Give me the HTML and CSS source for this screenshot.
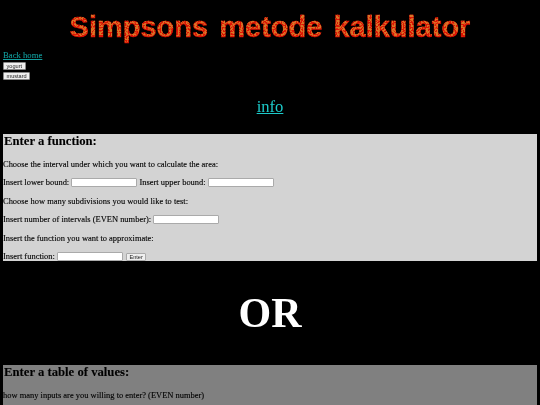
FILE: index.html
```html
<!DOCTYPE html>
<html lang="no">
<head>
<meta charset="utf-8">
<title>Simpsons metode kalkulator</title>
<link rel="stylesheet" href="styles.css">
</head>
<body>
<svg class="defs" width="0" height="0" aria-hidden="true">
  <filter id="fire" x="-5%" y="-20%" width="110%" height="140%" color-interpolation-filters="sRGB">
    <feOffset in="SourceAlpha" dy="-1" result="up"/>
    <feComposite in="up" in2="SourceAlpha" operator="in" result="inner"/>
    <feTurbulence type="fractalNoise" baseFrequency="0.6" numOctaves="2" seed="11" result="noise"/>
    <feColorMatrix in="noise" type="matrix" values="0 0 0 0 0.85  0 0 0 0 0.46  0 0 0 0 0.15  9 0 0 0 -3.8" result="spark"/>
    <feComposite in="spark" in2="inner" operator="in" result="sparkIn"/>
    <feGaussianBlur in="sparkIn" stdDeviation="0.3" result="sparkSoft"/>
    <feMerge>
      <feMergeNode in="SourceGraphic"/>
      <feMergeNode in="sparkSoft"/>
    </feMerge>
  </filter>
</svg>
<div class="page">
<header class="banner"><h1 class="fire">Simpsons metode kalkulator</h1></header>
<a class="home" href="#">Back home</a>
<div class="themes">
  <button class="small" type="button">yogurt</button>
  <button class="small" type="button">mustard</button>
</div>
<div class="info"><a href="#">info</a></div>
<section class="panel light">
  <h2>Enter a function:</h2>
  <p>Choose the interval under which you want to calculate the area:</p>
  <p>Insert lower bound: <input type="text"> Insert upper bound: <input type="text"></p>
  <p>Choose how many subdivisions you would like to test:</p>
  <p>Insert number of intervals (EVEN number): <input type="text"></p>
  <p>Insert the function you want to approximate:</p>
  <p>Insert function: <input type="text"> <button class="small enter" type="button">Enter</button></p>
</section>
<div class="or">OR</div>
<section class="panel dark">
  <h2>Enter a table of values:</h2>
  <p>how many inputs are you willing to enter? (EVEN number)</p>
</section>
</div>
</body>
</html>
```
FILE: styles.css
```css
html { background: #000; overflow: hidden; height: 405px; }
body {
  margin: 0;
  height: 405px;
  overflow: hidden;
  background: #000;
  font-family: "Liberation Serif", "Times New Roman", serif;
  font-size: 8.46px;
  color: #000;
}
.defs { display: block; height: 0; }
.page { padding: 0 3px; height: 405px; background: #000; filter: blur(0.25px); }
.banner { height: 50px; display: flex; justify-content: center; align-items: flex-start; }
.fire {
  margin: 9px 0 0;
  font-family: "Liberation Sans", Arial, sans-serif;
  font-weight: 700;
  font-size: 29px;
  line-height: 36px;
  word-spacing: 3px;
  color: #e01204;
  -webkit-text-stroke: 0.4px #e01204;
  filter: url(#fire);
  white-space: nowrap;
}
.home { display: block; color: #129c9c; line-height: 11px; font-size: 8.7px; -webkit-text-stroke: 0.1px #129c9c; }
.themes { display: flex; flex-direction: column; align-items: flex-start; gap: 2px; margin-top: 1px; }
.small {
  font-family: "Liberation Sans", Arial, sans-serif;
  font-size: 5.6px;
  line-height: 6px;
  height: 8px;
  padding: 0 2.5px;
  background: #efefef;
  color: #222;
  border: 1px solid #888;
  border-radius: 1px;
}
.info { text-align: center; font-size: 16.6px; line-height: 22px; margin-top: 16px; }
.info a { color: #1cc9c9; }
.panel { margin-top: 16px; padding: 0 1px 0 0; }
.light { background: #d3d3d3; height: 127px; overflow: hidden; }
.dark { background: #808080; margin-top: 0; height: 40px; }
.panel h2 { margin: 0 0 0 1px; font-size: 12.7px; line-height: 15px; -webkit-text-stroke: 0.1px #000; }
.panel p { margin: 8px 0 0; height: 10.5px; line-height: 10.5px; color: #000; -webkit-text-stroke: 0.12px #000; }
.panel h2 + p { margin-top: 9.5px; }
.panel input {
  width: 66px;
  height: 9px;
  box-sizing: border-box;
  padding: 0;
  border: 1px solid #aaa;
  background: #fff;
  border-radius: 1px;
  vertical-align: -2px;
}
.panel .enter { height: 8px; width: 20px; padding: 0; vertical-align: 0; margin-left: 1px; border-color: #aaa; -webkit-text-stroke: 0; }
.or {
  height: 104px;
  text-align: center;
  color: #fff;
  font-weight: 700;
  font-size: 42px;
  line-height: 104px;
}
```
